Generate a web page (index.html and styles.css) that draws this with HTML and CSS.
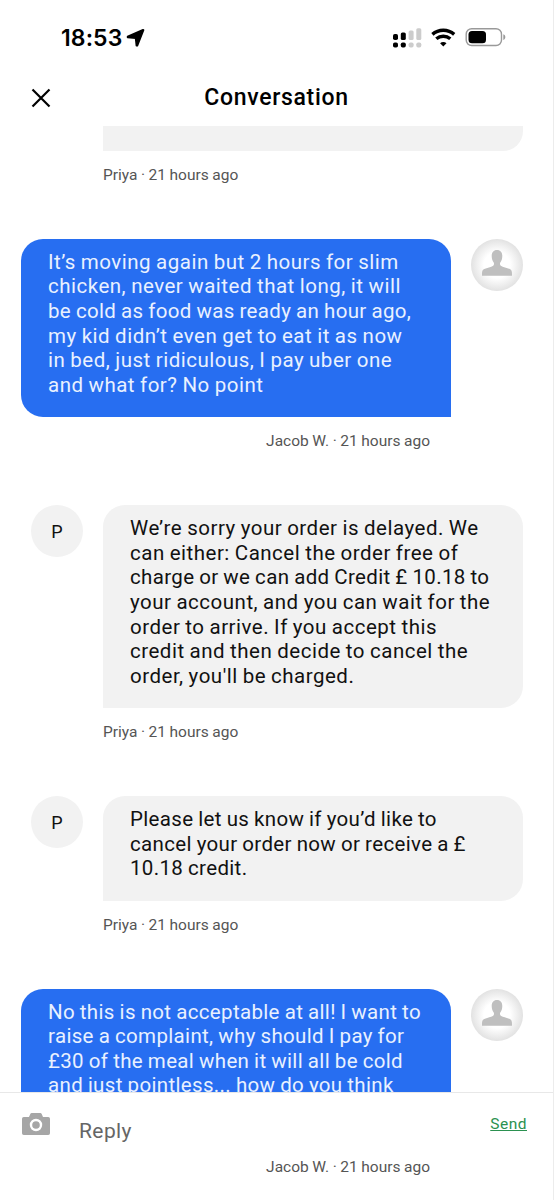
FILE: index.html
```html
<!DOCTYPE html>
<html lang="en">
<head>
  <meta charset="UTF-8">
  <meta name="viewport" content="width=device-width, initial-scale=1.0">
  <title>Conversation</title>
  <link rel="stylesheet" href="styles.css">
</head>
<body>
  <div class="screen">
    <div class="status-bar">
      <span class="time">18:53</span>
      <svg class="location" width="19" height="19" viewBox="0 0 19 19">
        <path d="M17 1.800 1.600 8.500v1l8 .6.8 7.500h1L17.600 2z"/>
      </svg>
      <svg class="status-icons" width="114" height="22" viewBox="0 0 114 22">
        <g class="sim-on">
          <rect x="1" y="7" width="5" height="6" rx="1.8"/>
          <rect x="1" y="15.500" width="5" height="5" rx="1.8"/>
          <rect x="8.800" y="5.500" width="5" height="7.500" rx="1.6"/>
          <rect x="8.800" y="15.500" width="5" height="5" rx="1.8"/>
        </g>
        <g class="sim-off">
          <rect x="16.600" y="3.500" width="5" height="9.500" rx="1.500"/>
          <rect x="16.600" y="15.500" width="5" height="5" rx="1.8"/>
          <rect x="24.300" y="1.200" width="5" height="11.800" rx="1.500"/>
          <rect x="24.300" y="15.500" width="5" height="5" rx="1.8"/>
        </g>
        <g class="wifi">
          <path d="M40.400 7.400a16.500 16.500 0 0 1 21.800 0"/>
          <path d="M44.300 11.800a10.800 10.800 0 0 1 14 0"/>
          <path class="wifi-dot" d="M51.300 19.500l-3.200-3.300a4.600 4.600 0 0 1 6.400 0z"/>
        </g>
        <rect class="battery" x="74.200" y="1.700" width="35.300" height="16.800" rx="5.500"/>
        <rect x="76.500" y="4" width="17.500" height="12.300" rx="3.500"/>
        <path class="battery-cap" d="M111.300 7.300c2.700.6 2.700 5 0 5.700z"/>
      </svg>
    </div>

    <header class="header">
      <svg class="close" width="20" height="20" viewBox="0 0 20 20">
        <path d="M1.500 1.500l17 17M18.500 1.500l-17 17"/>
      </svg>
      <h1>Conversation</h1>
    </header>

    <main class="feed">
      <div class="message agent">
        <div class="avatar-space"></div>
        <div class="bubble cut-top"></div>
        <p class="meta">Priya · 21 hours ago</p>
      </div>

      <div class="message customer">
        <div class="bubble">It’s moving again but 2 hours for slim<br>chicken, never waited that long, it will<br><span class="tight">be cold as food was ready an hour ago,</span><br>my kid didn’t even get to eat it as now<br>in bed, just ridiculous, I pay uber one<br>and what for? No point</div>
        <svg class="avatar" viewBox="0 0 52 52">
          <path d="M26 11c3.500 0 5.300 2.400 5.300 6 0 3-.8 5-2 6.500-.5.700-.4 2.600.5 3.200 2.200 1.400 6 1.900 9 3.300 2 1 2.300 2.500 2.200 6.700H11c-.1-4.200.2-5.700 2.200-6.700 3-1.400 6.800-1.900 9-3.300.9-.6 1-2.500.5-3.200-1.200-1.500-2-3.500-2-6.500 0-3.600 1.800-6 5.300-6z"/>
        </svg>
        <p class="meta">Jacob W. · 21 hours ago</p>
      </div>

      <div class="message agent">
        <div class="avatar">P</div>
        <div class="bubble">We’re sorry your order is delayed. We<br>can either: Cancel the order free of<br><span class="tight">charge or we can add Credit £ 10.18 to</span><br>your account, and you can wait for the<br>order to arrive. If you accept this<br>credit and then decide to cancel the<br>order, you'll be charged.</div>
        <p class="meta">Priya · 21 hours ago</p>
      </div>

      <div class="message agent">
        <div class="avatar">P</div>
        <div class="bubble tight">Please let us know if you’d like to<br>cancel your order now or receive a £<br>10.18 credit.</div>
        <p class="meta">Priya · 21 hours ago</p>
      </div>

      <div class="message customer">
        <div class="bubble tight">No this is not acceptable at all! I want to<br>raise a complaint, why should I pay for<br>£30 of the meal when it will all be cold<br>and just pointless... how do you think</div>
        <svg class="avatar" viewBox="0 0 52 52">
          <path d="M26 11c3.500 0 5.300 2.400 5.300 6 0 3-.8 5-2 6.500-.5.700-.4 2.600.5 3.200 2.200 1.400 6 1.900 9 3.300 2 1 2.300 2.500 2.200 6.700H11c-.1-4.200.2-5.700 2.200-6.700 3-1.400 6.800-1.900 9-3.300.9-.6 1-2.500.5-3.200-1.200-1.500-2-3.500-2-6.500 0-3.600 1.800-6 5.300-6z"/>
        </svg>
      </div>
    </main>

    <footer class="footer">
      <div class="composer">
        <svg class="camera" width="28" height="22" viewBox="0 0 28 22">
          <path d="M1.800 4H7l1.300-3Q8.700 0 9.700 0h8.600q1 0 1.400 1L21 4h5.200Q28 4 28 5.800v14.400q0 1.800-1.800 1.800H1.800Q0 22 0 20.200V5.800Q0 4 1.800 4z"/>
          <circle cx="14" cy="12" r="5"/>
        </svg>
        <span class="reply">Reply</span>
        <a class="send">Send</a>
      </div>
      <p class="meta">Jacob W. · 21 hours ago</p>
    </footer>
  </div>
</body>
</html>
```
FILE: styles.css
```css
* {
  box-sizing: border-box;
}
body {
  margin: 0;
  background: #fff;
  color: #111;
  font-family: Roboto, "Noto Sans", sans-serif;
}
.screen {
  display: flex;
  flex-direction: column;
  width: 554px;
  height: 1200px;
  overflow: hidden;
  border-right: 1px solid #ececec;
}

/* Status bar */
.status-bar {
  display: flex;
  align-items: center;
  height: 70px;
  padding: 5px 47px 0 61px;
}
.time {
  font-family: Inter, sans-serif;
  font-size: 23px;
  font-weight: 600;
  letter-spacing: 0.1px;
  color: #000;
}
.location {
  margin-left: 4px;
  stroke: #000;
  stroke-width: 1.6;
  stroke-linejoin: round;
}
.status-icons {
  margin-left: auto;
}
.sim-off {
  fill: #ccc;
}
.wifi {
  fill: none;
  stroke: #000;
  stroke-width: 3.4;
}
.wifi .wifi-dot {
  fill: #000;
  stroke: none;
}
.battery {
  fill: none;
  stroke: #999;
  stroke-width: 1.4;
}
.battery-cap {
  fill: #999;
}

/* Header */
.header {
  display: grid;
  grid-template-columns: 20px 1fr 20px;
  align-items: center;
  height: 56px;
  padding: 0 31px;
}
.header h1 {
  margin: 0;
  font-size: 23px;
  font-weight: 500;
  line-height: 28px;
  letter-spacing: 0.7px;
  text-align: center;
  color: #000;
}
.close {
  stroke: #000;
  stroke-width: 2.2;
}

/* Messages */
.feed {
  height: 966px;
  overflow: hidden;
}
.message {
  display: grid;
  column-gap: 20px;
  padding: 0 30px 0 31px;
}
.agent {
  grid-template-columns: 52px 420px;
}
.customer {
  grid-template-columns: 430px 52px;
  padding-left: 21px;
}
.bubble {
  padding: 11px 20px 20px 27px;
  border-radius: 22px;
  font-size: 20.5px;
  line-height: 24.6px;
  letter-spacing: 0.5px;
  word-spacing: -0.6px;
  white-space: nowrap;
}
.tight {
  letter-spacing: 0.34px;
}
.agent .bubble {
  background: #f2f2f2;
  border-bottom-left-radius: 0;
}
.customer .bubble {
  background: #276ef1;
  border-bottom-right-radius: 0;
  color: #e9f1ff;
}
.cut-top {
  height: 25px;
  padding: 0;
  border-radius: 0 0 20px 0;
}
.avatar {
  width: 52px;
  height: 52px;
  border-radius: 50%;
}
div.avatar {
  display: flex;
  align-items: center;
  justify-content: center;
  background: #f2f2f2;
  font-size: 18px;
}
svg.avatar {
  background: radial-gradient(circle closest-side, #fff 50%, #e2e2e2 100%);
  fill: #bfbfbf;
}
.meta {
  margin: 0;
  height: 87.8px;
  padding-top: 14px;
  font-size: 15.5px;
  line-height: 20px;
  word-spacing: -0.3px;
  color: #555;
}
.agent .meta {
  grid-column: 2;
}
.customer .meta {
  padding-right: 21px;
  text-align: right;
}

/* Reply box */
.footer {
  height: 108px;
  border-top: 1px solid #e8e8e8;
}
.composer {
  display: flex;
  align-items: flex-start;
  height: 64px;
  padding: 20px 26px 0 22px;
}
.camera {
  fill: #a6a6a6;
}
.camera circle {
  stroke: #fff;
  stroke-width: 2.4;
}
.reply {
  margin: 5px 0 0 29px;
  font-size: 21px;
  line-height: 26px;
  letter-spacing: 0.4px;
  color: #666;
}
.send {
  margin-left: auto;
  font-size: 15.5px;
  line-height: 22px;
  letter-spacing: 0.5px;
  color: #2b9150;
  text-decoration: underline;
}
.footer .meta {
  height: 20px;
  padding: 0 123px 0 0;
  text-align: right;
}
```
